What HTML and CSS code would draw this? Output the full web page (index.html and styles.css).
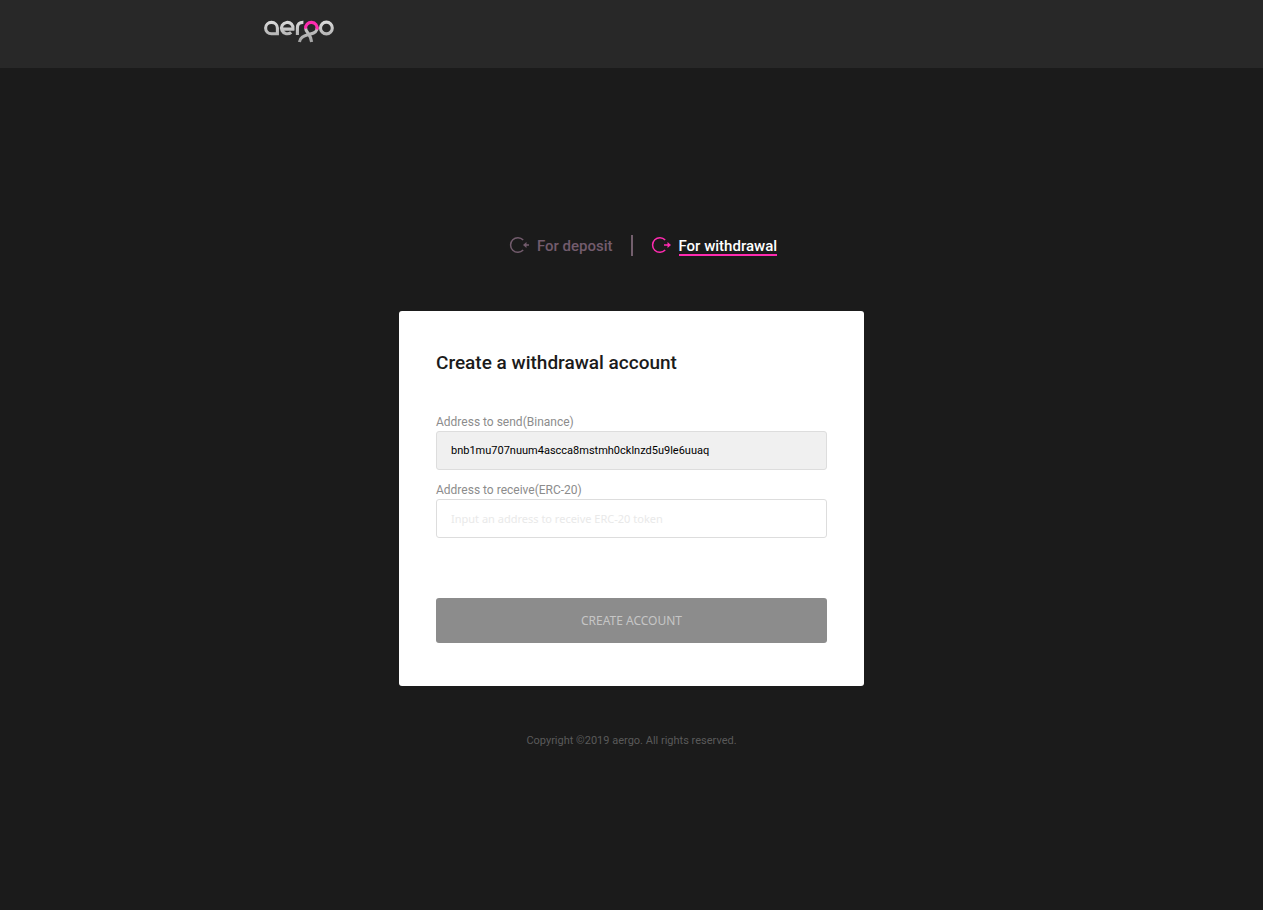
FILE: index.html
```html
<!DOCTYPE html>
<html lang="en">
<head>
<meta charset="utf-8">
<meta name="viewport" content="width=device-width, initial-scale=1">
<title>aergo</title>
<link rel="stylesheet" href="styles.css">
</head>
<body>
<header class="header">
  <div class="header-inner">
    <a class="logo" href="#" aria-label="aergo">
      <svg width="70" height="24" viewBox="0 0 70 24" fill="none" stroke-width="3.1">
        <defs>
          <linearGradient id="silver" gradientUnits="userSpaceOnUse" x1="0" y1="0" x2="0" y2="22">
            <stop offset="0" stop-color="#dedede"/>
            <stop offset="1" stop-color="#a2a2a2"/>
          </linearGradient>
        </defs>
        <g stroke="url(#silver)">
          <path d="M13.4 13.8H7.4A5.9 5.7 0 1 1 13.4 8V15.2"/>
          <path d="M17.6 9.1H29A5.8 5.7 0 1 0 27.2 12.3"/>
          <path d="M33.4 15V8Q33.4 2.2 39.4 2.4"/>
          <path d="M41.6 8C41.6 12.5 46.6 13.2 47.6 22"/>
          <circle cx="62.4" cy="8" r="5.9"/>
          <path d="M53.2 7.5C53.2 13.5 47.5 13.6 44.5 14.6C39 16.2 36.2 17.5 35.4 22"/>
        </g>
        <path stroke="#ff2bb0" d="M41.6 8.8A5.8 5.8 0 1 1 53 9.5"/>
      </svg>
    </a>
  </div>
</header>
<main class="main">
  <nav class="tabs">
    <a class="tab tab-deposit" href="#">
      <svg class="tab-icon" width="20" height="20" viewBox="0 -1 20 20" fill="none" stroke="currentColor" stroke-width="1.5">
        <path d="M14.2 4A7.3 7.3 0 1 0 14.2 14"/>
        <path d="M20 9H15"/>
        <path d="M17.5 6L14 9L17.5 12Z" fill="currentColor" stroke="none"/>
      </svg>
      <span class="tab-text">For deposit</span>
    </a>
    <span class="divider"></span>
    <a class="tab tab-active" href="#" aria-current="page">
      <svg class="tab-icon" width="20" height="20" viewBox="0 -1 20 20" fill="none" stroke="currentColor" stroke-width="1.5">
        <path d="M14.2 4A7.3 7.3 0 1 0 14.2 14"/>
        <path d="M13 9H18"/>
        <path d="M16.5 6L20 9L16.5 12Z" fill="currentColor" stroke="none"/>
      </svg>
      <span class="tab-text">For withdrawal</span>
    </a>
  </nav>
  <form class="card">
    <h1 class="title">Create a withdrawal account</h1>
    <div class="field">
      <label class="label" for="send">Address to send(Binance)</label>
      <input class="input input-readonly" id="send" type="text" value="bnb1mu707nuum4ascca8mstmh0cklnzd5u9le6uuaq" readonly>
    </div>
    <div class="field">
      <label class="label" for="receive">Address to receive(ERC-20)</label>
      <input class="input" id="receive" type="text" placeholder="Input an address to receive ERC-20 token">
    </div>
    <button class="submit" type="button">CREATE ACCOUNT</button>
  </form>
</main>
<footer class="footer">Copyright ©2019 aergo. All rights reserved.</footer>
</body>
</html>
```
FILE: styles.css
```css
* {
  box-sizing: border-box;
}

body {
  margin: 0;
  min-height: 100vh;
  background: #1b1b1b;
  color: #1b1b1b;
  font-family: Roboto, "Liberation Sans", sans-serif;
}

.header {
  background: #282828;
  padding: 20px 16px 24px;
}

.header-inner {
  max-width: 735px;
  margin: 0 auto;
}

.logo,
.logo svg {
  display: block;
  width: 70px;
}

.main {
  max-width: 465px;
  margin: 0 auto;
  padding-top: 167px;
}

.tabs {
  display: grid;
  grid-template-columns: 1fr 2px 1fr;
  column-gap: 18px;
  align-items: center;
  margin-bottom: 55px;
}

.tab {
  display: flex;
  align-items: flex-start;
  gap: 8px;
  font-size: 15px;
  font-weight: 500;
  line-height: 15px;
  text-decoration: none;
  white-space: nowrap;
}

.tab-icon {
  flex: none;
}

.tab-text {
  padding-top: 4px;
  border-bottom: 2px solid transparent;
}

.tab-deposit {
  justify-content: flex-end;
  color: #735c6d;
}

.tab-active {
  color: #ff2bb0;
}

.tab-active .tab-text {
  color: #fff;
  border-color: #ff2bb0;
}

.divider {
  height: 21px;
  background: #735f6d;
}

.card {
  background: #fff;
  border-radius: 3px;
  padding: 38px 37px 43px;
}

.title {
  margin: 0 0 38px;
  font-size: 19px;
  font-weight: 500;
  line-height: 28px;
}

.field {
  margin-bottom: 13px;
}

.label {
  display: block;
  color: #8c8c8c;
  font-size: 12px;
  line-height: 14px;
  padding-bottom: 2px;
}

.input {
  display: block;
  width: 100%;
  height: 39px;
  padding: 0 14px;
  border: 1px solid #ddd;
  border-radius: 3px;
  background: #fff;
  color: #000;
  font-family: "Noto Sans", sans-serif;
  font-size: 11px;
}

.input-readonly {
  background: #f0f0f0;
  font-family: Roboto, sans-serif;
}

.input::placeholder {
  color: #e9e9e9;
  opacity: 1;
}

.submit {
  display: block;
  width: 100%;
  height: 45px;
  margin-top: 60px;
  border: 0;
  border-radius: 3px;
  background: #8c8c8c;
  color: #c6c6c6;
  font-family: "Noto Sans", sans-serif;
  font-size: 12px;
}

.footer {
  padding: 47px 16px;
  color: #5a5a5a;
  font-size: 11px;
  line-height: 16px;
  text-align: center;
}
```
